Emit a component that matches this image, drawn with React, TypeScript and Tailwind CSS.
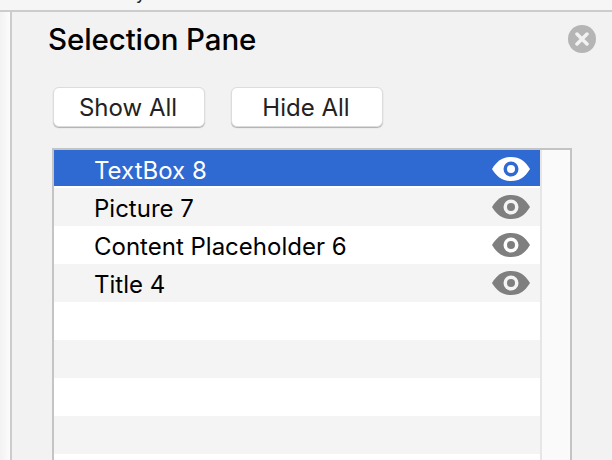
function Eye({ dark, pupil }: { dark: string; pupil: string }) {
  return (
    <svg width="38" height="24" viewBox="0 0 38 24" className="block">
      <path d="M0 12 C5 4 10 0 19 0 C28 0 33 4 38 12 C33 20 28 24 19 24 C10 24 5 20 0 12 Z" fill={dark} />
      <circle cx="19" cy="12" r="7.500" fill={pupil} />
      <circle cx="19" cy="12" r="4" fill={dark} />
    </svg>
  );
}

const rows = [
  { label: "TextBox 8", bg: "h-[36px] mb-[2px] bg-[#2f69d2] text-white", text: "pt-[6px]", icon: "mt-[2px]", eye: "#ffffff", pupil: "#2f69d2" },
  { label: "Picture 7", bg: "h-[38px] bg-[#f4f4f4] text-black", text: "pt-[4px]", icon: "", eye: "#7f7f7f", pupil: "#f4f4f4" },
  { label: "Content Placeholder 6", bg: "h-[38px] bg-white text-black", text: "pt-[4px]", icon: "", eye: "#7f7f7f", pupil: "#ffffff" },
  { label: "Title 4", bg: "h-[38px] bg-[#f4f4f4] text-black", text: "pt-[4px]", icon: "", eye: "#7f7f7f", pupil: "#f4f4f4" },
];

const empties = ["bg-white", "bg-[#f4f4f4]", "bg-white", "bg-[#f4f4f4]", "bg-white"];

const buttonClass =
  "h-[40px] w-[152px] rounded-[6px] border border-[#dcdcdc] bg-white pt-[2px] pr-[2px] text-[24px] leading-none text-[#222222] shadow-[0_1px_1px_rgba(0,0,0,0.28)]";

export default function App() {
  return (
    <div className="h-[460px] w-[612px] overflow-hidden bg-[#f2f2f2] font-['Inter','Liberation_Sans',sans-serif]">
      <div className="flex h-[12px] justify-start overflow-hidden border-b-2 border-[#cccccc] bg-[#f6f6f6] pl-[118px]">
        <span className="-mt-[17px] text-[18px] leading-[20px] text-[#222222]">Styles</span>
      </div>
      <div className="flex h-[448px]">
        <div className="w-[12px] shrink-0 border-r-2 border-[#cccccc] bg-gradient-to-r from-[#f2f2f2] to-[#fcfcfc]" />
        <div className="min-w-0 flex-1">
          <div className="flex h-[54px] items-center justify-between pl-[36px] pr-[16px]">
            <h1 className="text-[29.500px] leading-[32px] font-medium tracking-[-0.1px] text-black">Selection Pane</h1>
            <div className="flex h-[28px] w-[28px] items-center justify-center rounded-full bg-[#b5b5b5]">
              <svg width="14" height="14" viewBox="0 0 14 14">
                <path d="M2 2 L12 12 M12 2 L2 12" stroke="#f2f2f2" strokeWidth="3.500" strokeLinecap="round" />
              </svg>
            </div>
          </div>
          <div className="flex gap-[26px] pl-[41px] pt-[21px]">
            <button className={buttonClass}>Show All</button>
            <button className={buttonClass}>Hide All</button>
          </div>
          <div className="ml-[40px] mt-[21px] flex h-[400px] w-[520px] border-2 border-b-0 border-[#c4c4c4] bg-white">
            <div className="w-[486px] shrink-0">
              {rows.map((r) => (
                <div key={r.label} className={`flex items-center justify-between pl-[40px] pr-[10px] text-[24px] leading-none ${r.bg}`}>
                  <span className={r.text}>{r.label}</span>
                  <div className={r.icon}>
                    <Eye dark={r.eye} pupil={r.pupil} />
                  </div>
                </div>
              ))}
              {empties.map((c, i) => (
                <div key={i} className={`h-[38px] ${c}`} />
              ))}
            </div>
            <div className="flex-1 border-l-2 border-[#e6e6e6] bg-[#fafafa]" />
          </div>
        </div>
      </div>
    </div>
  );
}
